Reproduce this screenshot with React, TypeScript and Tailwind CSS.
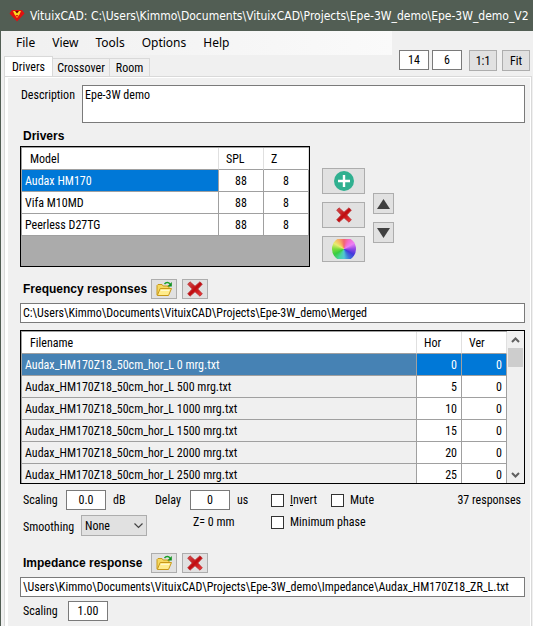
import type { ReactNode } from "react";

const drivers = [
  { model: "Audax HM170", spl: 88, z: 8 },
  { model: "Vifa M10MD", spl: 88, z: 8 },
  { model: "Peerless D27TG", spl: 88, z: 8 },
];

const responses = [
  { file: "Audax_HM170Z18_50cm_hor_L 0 mrg.txt", hor: 0, ver: 0 },
  { file: "Audax_HM170Z18_50cm_hor_L 500 mrg.txt", hor: 5, ver: 0 },
  { file: "Audax_HM170Z18_50cm_hor_L 1000 mrg.txt", hor: 10, ver: 0 },
  { file: "Audax_HM170Z18_50cm_hor_L 1500 mrg.txt", hor: 15, ver: 0 },
  { file: "Audax_HM170Z18_50cm_hor_L 2000 mrg.txt", hor: 20, ver: 0 },
  { file: "Audax_HM170Z18_50cm_hor_L 2500 mrg.txt", hor: 25, ver: 0 },
];

function Logo() {
  return (
    <svg width="16" height="14" viewBox="0 0 16 14" className="shrink-0" aria-hidden="true">
      <path d="M3 1h10l2.500 3.500L8 12.500.5 4.500z" fill="#e01010" />
      <path d="M4.500 2h7l-1 3h-5z" fill="#700000" />
      <path d="M4 2h2l2 2.500L10 2h2l-1.500 3.500L8 9 5.500 5.500z" fill="#ffd820" />
      <path d="M6.500 6h3L8 8z" fill="#e01010" />
    </svg>
  );
}

function CrossIcon({ size }: { size: number }) {
  return (
    <svg width={size} height={size} viewBox="0 0 16 16" aria-hidden="true">
      <defs>
        <linearGradient id="crossRed" x1="0" y1="0" x2="1" y2="1">
          <stop offset="0" stopColor="#d85050" />
          <stop offset="0.5" stopColor="#c00c10" />
          <stop offset="1" stopColor="#f04040" />
        </linearGradient>
      </defs>
      <path
        d="M3 .8 8 5.2 13 .8 15.3 3.2 10.8 8l4.5 4.8L13 15.2 8 10.8 3 15.2.7 12.8 5.2 8 .7 3.2z"
        fill="url(#crossRed)"
        stroke="#b83034"
        strokeWidth=".8"
        strokeLinejoin="round"
      />
    </svg>
  );
}

function FolderIcon() {
  return (
    <svg width="16" height="16" viewBox="0 0 16 16" aria-hidden="true">
      <path d="M1 14V4.5L2 3.5h4l1.200 1.500H13V8" fill="#f5d860" stroke="#c89818" />
      <path d="M1.300 14.500 4.200 7.500H15.500L12.500 14.500z" fill="#ffec8c" stroke="#c89818" strokeLinejoin="round" />
      <path d="M4.800 9.500h8.500" stroke="#fff8cc" />
      <path d="M8.500 3.200C10 1 12.500 1 14 3" fill="none" stroke="#18a028" strokeWidth="1.500" />
      <path d="M15.800 1v4.500h-4.500z" fill="#109020" />
    </svg>
  );
}

function PlusIcon() {
  return (
    <svg width="20" height="20" viewBox="0 0 20 20" aria-hidden="true">
      <circle cx="10" cy="10" r="10" fill="#30b090" />
      <path d="M10 4v12M4 10h12" stroke="#fff" strokeWidth="2.400" />
    </svg>
  );
}

function WheelIcon() {
  return (
    <span className="flex h-5 w-6 items-center overflow-hidden">
      <span className="size-6 shrink-0 rounded-full bg-[conic-gradient(#f46470,#f46ccc,#ec80f4,#9448e4,#4438dc,#3c78d8,#50c8d4,#48d49c,#38cc40,#7cdc3c,#e8ec70,#f8b060,#f46470)]" />
    </span>
  );
}

function PushButton({ label, size, children }: { label: string; size: string; children: ReactNode }) {
  return (
    <button
      type="button"
      aria-label={label}
      className={`flex shrink-0 items-center justify-center border border-[#adadad] bg-[#e1e1e1] ${size}`}
    >
      {children}
    </button>
  );
}

function NumberBox({ label, value, width }: { label: string; value: string; width: string }) {
  return (
    <input
      aria-label={label}
      defaultValue={value}
      className={`h-5 border border-[#7a7a7a] bg-white text-center ${width}`}
    />
  );
}

function Check({ label }: { label: ReactNode }) {
  return (
    <label className="flex items-center gap-[6px]">
      <input type="checkbox" className="size-[13px] appearance-none border border-[#333] bg-white" />
      <span>{label}</span>
    </label>
  );
}

function PathBox({ label, value }: { label: string; value: string }) {
  return (
    <input
      aria-label={label}
      defaultValue={value}
      className="block h-5 w-full border border-[#7a7a7a] bg-white px-[2px]"
    />
  );
}

function SectionHead({ title }: { title: string }) {
  return (
    <div className="flex h-5 items-center pl-[3px]">
      <h2 className="w-32 font-['Liberation_Sans',sans-serif] font-bold whitespace-nowrap">{title}</h2>
      <div className="flex gap-[5px]">
        <PushButton label={`Open ${title}`} size="h-5 w-[26px]"><FolderIcon /></PushButton>
        <PushButton label={`Clear ${title}`} size="h-5 w-[26px]"><CrossIcon size={16} /></PushButton>
      </div>
    </div>
  );
}

const headCell = "h-[22px] border-r border-b border-r-[#e0e0e0] border-b-[#a0a0a0] text-left font-normal";
const cell = "h-[22px] border-r border-b border-[#a0a0a0]";

export default function App() {
  return (
    <div className="min-h-[626px] w-full overflow-hidden border-l border-[#525e54] bg-[#f0f0f0] font-['Roboto_Condensed','Liberation_Sans',sans-serif] text-[12px] leading-4 text-black">
      <header className="flex h-[31px] items-center gap-[5px] overflow-hidden bg-[#525e54] pl-2 font-['DejaVu_Sans_Condensed','Noto_Sans',sans-serif] text-white">
        <Logo />
        <h1 className="whitespace-nowrap">VituixCAD: C:\Users\Kimmo\Documents\VituixCAD\Projects\Epe-3W_demo\Epe-3W_demo_V2</h1>
      </header>

      <div className="flex h-[45px]">
        <div className="flex flex-1 flex-col justify-between">
          <nav className="flex h-6 items-center gap-[17px] bg-linear-to-r from-[#f0f0f0] to-[#fafafa] pl-[15px] font-['Noto_Sans','Open_Sans',sans-serif]">
            <button type="button">File</button>
            <button type="button">View</button>
            <button type="button">Tools</button>
            <button type="button">Options</button>
            <button type="button">Help</button>
          </nav>
          <div role="tablist" className="flex items-end pl-[3px]">
            <button type="button" role="tab" aria-selected="true" className="h-5 w-[49px] border-x border-t border-[#d9d9d9] bg-white">Drivers</button>
            <button type="button" role="tab" aria-selected="false" className="h-[18px] w-[57px] border-t border-r border-[#d9d9d9]">Crossover</button>
            <button type="button" role="tab" aria-selected="false" className="h-[18px] w-10 border-t border-r border-[#d9d9d9]">Room</button>
          </div>
        </div>
        <div className="flex w-[141px] shrink-0 items-start gap-[3px] pt-[19px] pl-[7px]">
          <NumberBox label="Columns" value="14" width="w-[30px]" />
          <NumberBox label="Rows" value="6" width="w-[30px]" />
          <div className="flex gap-[5px] pl-1">
            <PushButton label="1:1" size="h-[21px] w-7">1:1</PushButton>
            <PushButton label="Fit" size="h-[21px] w-7">Fit</PushButton>
          </div>
        </div>
      </div>

      <main className="mr-px ml-[3px] border-x border-t border-[#d9d9d9]">
        <div className="min-h-[549px] border-t border-r border-l-[3px] border-white bg-[#f0f0f0] pt-[7px] pr-[5px] pl-3">
          <div className="flex">
            <label htmlFor="description" className="w-[62px] shrink-0 pt-[2px] pl-px">Description</label>
            <textarea
              id="description"
              defaultValue="Epe-3W demo"
              className="block h-[38px] flex-1 resize-none border border-[#7a7a7a] bg-white px-[2px] py-px"
            />
          </div>

          <h2 className="mt-[5px] mb-[2px] pl-[3px] font-['Liberation_Sans',sans-serif] font-bold">Drivers</h2>
          <div className="flex items-start">
            <div className="h-[121px] w-[290px] border border-black bg-[#ababab]">
              <table className="w-full table-fixed border-separate border-spacing-0 border-t border-l border-[#a0a0a0] bg-white">
                <colgroup>
                  <col />
                  <col className="w-[45px]" />
                  <col className="w-[45px]" />
                </colgroup>
                <thead>
                  <tr>
                    <th className={`${headCell} pl-2`}>Model</th>
                    <th className={`${headCell} pl-[7px]`}>SPL</th>
                    <th className={`${headCell} pl-[7px]`}>Z</th>
                  </tr>
                </thead>
                <tbody>
                  {drivers.map((d, i) => (
                    <tr key={d.model}>
                      <td className={`${cell} pl-[3px] ${i === 0 ? "bg-[#0078d7] text-white" : ""}`}>{d.model}</td>
                      <td className={`${cell} text-center`}>{d.spl}</td>
                      <td className={`${cell} text-center`}>{d.z}</td>
                    </tr>
                  ))}
                </tbody>
              </table>
            </div>
            <div className="ml-3 flex flex-col gap-2 pt-[22px]">
              <PushButton label="Add driver" size="h-[26px] w-[43px]"><PlusIcon /></PushButton>
              <PushButton label="Delete driver" size="h-[26px] w-[43px]"><CrossIcon size={16} /></PushButton>
              <PushButton label="Driver color" size="h-[26px] w-[43px]"><WheelIcon /></PushButton>
            </div>
            <div className="ml-2 flex flex-col gap-2 pt-[47px]">
              <PushButton label="Move up" size="size-[21px]">
                <svg width="13" height="10" viewBox="0 0 13 10" aria-hidden="true"><path d="M6.500 0 13 10H0z" fill="#404040" /></svg>
              </PushButton>
              <PushButton label="Move down" size="size-[21px]">
                <svg width="13" height="10" viewBox="0 0 13 10" aria-hidden="true"><path d="M6.500 10 13 0H0z" fill="#404040" /></svg>
              </PushButton>
            </div>
          </div>

          <section className="pt-3">
            <SectionHead title="Frequency responses" />
            <div className="pt-1">
              <PathBox label="Frequency response folder" value="C:\Users\Kimmo\Documents\VituixCAD\Projects\Epe-3W_demo\Merged" />
            </div>
            <div className="mt-[7px] flex h-[154px] overflow-hidden border border-black">
              <div className="flex-1">
                <table className="w-full table-fixed border-separate border-spacing-0 border-t border-l border-[#a0a0a0] bg-white">
                  <colgroup>
                    <col />
                    <col className="w-[45px]" />
                    <col className="w-[45px]" />
                  </colgroup>
                  <thead>
                    <tr>
                      <th className={`${headCell} pl-2`}>Filename</th>
                      <th className={`${headCell} pl-[7px]`}>Hor</th>
                      <th className={`${headCell} pl-[7px]`}>Ver</th>
                    </tr>
                  </thead>
                  <tbody>
                    {responses.map((r, i) => (
                      <tr key={r.file} className={i === 0 ? "bg-[#0078d7] text-white" : ""}>
                        <td className={`${cell} pl-[3px] whitespace-nowrap ${i === 0 ? "bg-[#4682b4]" : "bg-[#f0f0f0]"}`}>{r.file}</td>
                        <td className={`${cell} pr-1 text-right`}>{r.hor}</td>
                        <td className={`${cell} pr-1 text-right`}>{r.ver}</td>
                      </tr>
                    ))}
                  </tbody>
                </table>
              </div>
              <div className="flex w-[17px] shrink-0 flex-col items-center justify-between bg-[#f0f0f0]">
                <div className="flex flex-col items-center">
                  <svg width="17" height="17" viewBox="0 0 17 17" aria-hidden="true"><path d="M5 11 8.500 7.500 12 11" fill="none" stroke="#606060" strokeWidth="2" /></svg>
                  <div className="h-[19px] w-[15px] bg-[#cdcdcd]" />
                </div>
                <svg width="17" height="17" viewBox="0 0 17 17" aria-hidden="true"><path d="M5 7 8.500 10.500 12 7" fill="none" stroke="#606060" strokeWidth="2" /></svg>
              </div>
            </div>
          </section>

          <div className="mt-[6px] flex h-[46px] pl-[3px]">
            <div className="w-[132px] shrink-0">
              <div className="flex h-5 items-center">
                <label className="flex items-center">
                  <span className="w-[43px]">Scaling</span>
                  <NumberBox label="Scaling" value="0.0" width="w-10" />
                </label>
                <span className="pl-[7px]">dB</span>
              </div>
              <div className="flex items-center pt-[5px]">
                <label htmlFor="smoothing" className="w-[58px] pt-[2px]">Smoothing</label>
                <div className="relative">
                  <select id="smoothing" className="block h-[21px] w-[66px] appearance-none border border-[#adadad] bg-[#e1e1e1] pl-[3px]">
                    <option>None</option>
                  </select>
                  <svg width="9" height="6" viewBox="0 0 9 6" className="pointer-events-none absolute top-2 right-1" aria-hidden="true">
                    <path d="M.5 .5 4.500 4.500 8.500 .5" fill="none" stroke="#444" strokeWidth="1.200" />
                  </svg>
                </div>
              </div>
            </div>
            <div className="w-[116px] shrink-0">
              <div className="flex h-5 items-center">
                <label className="flex items-center">
                  <span className="w-[35px]">Delay</span>
                  <NumberBox label="Delay" value="0" width="w-10" />
                </label>
                <span className="pl-[7px]">us</span>
              </div>
              <p className="pt-1 pl-[38px]">Z= 0 mm</p>
            </div>
            <div className="flex-1">
              <div className="flex h-5 items-center">
                <div className="flex gap-[14px]">
                  <Check label={<><span className="underline">I</span>nvert</>} />
                  <Check label="Mute" />
                </div>
                <span className="ml-auto pr-1">37 responses</span>
              </div>
              <div className="pt-1"><Check label="Minimum phase" /></div>
            </div>
          </div>

          <section className="pt-[17px]">
            <SectionHead title="Impedance response" />
            <div className="pt-1">
              <PathBox label="Impedance response file" value="\Users\Kimmo\Documents\VituixCAD\Projects\Epe-3W_demo\Impedance\Audax_HM170Z18_ZR_L.txt" />
            </div>
            <label className="flex items-center pt-1 pl-[3px]">
              <span className="w-[45px]">Scaling</span>
              <NumberBox label="Impedance scaling" value="1.00" width="w-10" />
            </label>
          </section>
        </div>
      </main>
    </div>
  );
}
